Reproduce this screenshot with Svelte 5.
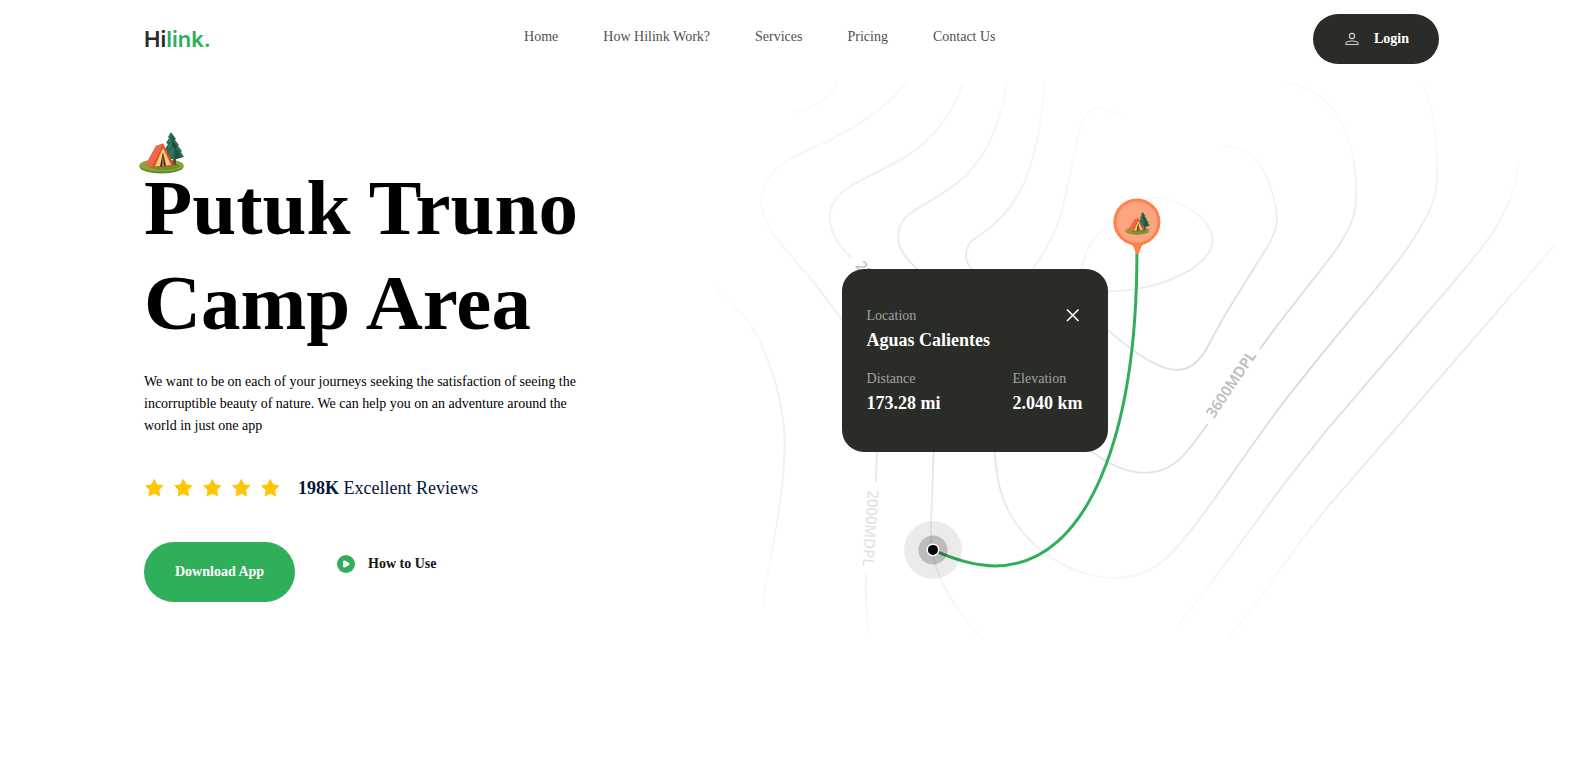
<script>
  const links = ['Home', 'How Hilink Work?', 'Services', 'Pricing', 'Contact Us'];
  const stars = [1, 2, 3, 4, 5];
  const contours = [
    'M794 112C812 110 828 100 838 84',
    'M906 83C880 115 850 130 828 141C805 152 790 156 775 170C764 182 761 192 761 202C763 222 772 233 785 249C800 266 820 288 842 320C865 352 880 400 877 452L876 482',
    'M866 574C865 600 866 620 870 638',
    'M963 83C950 120 930 142 905 157C880 173 850 182 838 196C830 206 829 215 830 222C832 238 843 249 851 258',
    'M934 440L932 500C930 530 930 550 937 570C945 592 962 618 982 638',
    'M1007 83C1003 110 992 145 975 165C955 190 930 200 912 212C900 220 898 232 898 238C899 252 910 262 920 272',
    'M994 440C996 480 1001 500 1012 517C1030 548 1070 578 1115 578C1150 577 1165 562 1185 538C1210 508 1240 461 1280 407C1310 368 1345 326 1375 290C1393 268 1410 247 1423 223C1433 206 1437 192 1437 180C1438 147 1436 114 1423 83',
    'M1045 83C1043 105 1039 140 1030 167C1020 200 1000 222 980 235C972 240 966 245 966 255C966 262 969 266 974 272',
    'M1125 117L1105 109C1095 105 1087 112 1083 120C1076 138 1073 163 1068 183C1064 207 1058 228 1047 247C1042 256 1034 264 1032 272',
    'M1108 291C1090 288 1080 278 1082 269C1085 246 1100 230 1113 220C1126 207 1140 198 1157 198C1175 199 1211 215 1213 240C1212 262 1180 279 1147 287C1133 290 1120 292 1108 291Z',
    'M1108 330C1126 346 1155 370 1177 370C1193 370 1202 357 1207 348C1216 332 1222 319 1230 307L1253 270C1263 253 1276 238 1277 220C1277 203 1270 183 1263 170C1254 154 1240 146 1220 146',
    'M1085 446C1105 463 1125 473 1145 473C1178 473 1190 447 1208 424',
    'M1260 349L1280 322L1305 290C1325 264 1356 231 1356 200C1358 175 1353 145 1340 120C1328 97 1305 83 1283 83',
    'M1177 627C1200 599 1235 550 1260 517C1280 488 1304 459 1327 430L1447 290C1477 254 1517 213 1518 162',
    'M1230 637L1260 598C1280 570 1303 537 1327 508L1427 393L1555 245',
    'M713 285C723 297 734 305 743 315C757 331 764 350 770 367C779 390 787 427 784 460C783 500 774 535 770 563C766 580 764 594 763 608'
  ];
  // Spots of light in the mask that let the contour lines show through
  const glows = [
    { id: 'east', place: 'translate(1270 370) rotate(-25) scale(330 200)', strength: 1 },
    { id: 'north', place: 'translate(930 235) scale(180 170)', strength: 0.45 },
    { id: 'south', place: 'translate(930 430) scale(240 200)', strength: 0.65 }
  ];
</script>

{#snippet tent()}
  <ellipse cx="22.5" cy="34.5" rx="22" ry="7" fill="#64842a" />
  <ellipse cx="22.5" cy="33.2" rx="22" ry="6.4" fill="#86a83a" />
  <ellipse cx="25" cy="34" rx="15" ry="4" fill="#6c8e2b" />
  <path d="M34 25h3v8h-3z" fill="#684633" />
  <path d="M32 0L29 5L30 6L27 11L29 12L26 17L28 19L27 24L31 27L38 27L45 25L42 20L43 19L39 14L40 13L36 8L37 7Z" fill="#2b6f52" />
  <path d="M32 2L33 8L33 13L36 18L35 26L41 26L40 20L37 17L38 14L34 9L35 7Z" fill="#1a5240" />
  <path d="M31 6L30 10M32 12L29 16M34 18L31 23" stroke="#3f8b69" stroke-width="1" fill="none" />
  <path d="M17 14L24 11.500L35 33L27 34.500L17 35L6 34Z" fill="#c9402b" />
  <path d="M17 14L24 11.500L21 20L15 35L6 34Z" fill="#f0684a" />
  <path d="M24 12L34 33L28 34L24 20L17 35L13 35Z" fill="#e4502f" />
  <path d="M24 16L32 33L16 34.500Z" fill="#f0d07a" />
  <path d="M24 20L27 33.500L21 34.500Z" fill="#4a1f18" />
  <path d="M24 22L25 34L23 34Z" fill="#b9894a" />
{/snippet}

<div class="page">
  <header>
    <a class="logo" href="#home" aria-label="Hilink."><span>Hi</span>link.</a>
    <nav aria-label="Main">
      {#each links as link}
        <a href="#{link}">{link}</a>
      {/each}
    </nav>
    <button class="login" type="button">
      <svg width="16" height="16" viewBox="0 0 16 16" fill="none" stroke="#d2d2d0" stroke-width="1.1" aria-hidden="true">
        <circle cx="8" cy="5" r="2.6" />
        <path d="M2 13.500V12.500C2 10.800 5 10 8 10S14 10.800 14 12.500V13.500Z" stroke-linejoin="round" />
      </svg>
      Login
    </button>
  </header>

  <main>
    <section class="intro">
      <svg class="camp" viewBox="0 0 45 42" aria-hidden="true">{@render tent()}</svg>
      <h1>Putuk Truno Camp Area</h1>
      <p class="lead">
        We want to be on each of your journeys seeking the satisfaction of seeing the incorruptible
        beauty of nature. We can help you on an adventure around the world in just one app
      </p>
      <div class="reviews">
        <div class="stars">
          {#each stars as star (star)}
            <svg width="20" height="20" viewBox="0 0 20 20" aria-hidden="true">
              <path
                d="M10.300 1.500L13 6.800L18.800 7.700L14.600 11.900L15.500 17.800L10.300 15.300L5.100 17.800L6 11.900L1.800 7.700L7.600 6.800Z"
                fill="#fec601" stroke="#fec601" stroke-width="1" stroke-linejoin="round"
              />
            </svg>
          {/each}
        </div>
        <p><strong>198K</strong> Excellent Reviews</p>
      </div>
      <div class="actions">
        <button class="download" type="button">Download App</button>
        <button class="howto" type="button">
          <svg width="18" height="18" viewBox="0 0 18 18" aria-hidden="true">
            <circle cx="9" cy="9" r="9" fill="#30af5b" />
            <path d="M7.500 7V11L11 9Z" fill="#fff" stroke="#fff" stroke-width="3" stroke-linejoin="round" />
          </svg>
          How to Use
        </button>
      </div>
    </section>

    <section class="map" aria-label="Route map">
      <svg class="terrain" viewBox="713 83 856 555">
        <defs>
          {#each glows as glow (glow.id)}
            <radialGradient id={glow.id} gradientUnits="userSpaceOnUse" cx="0" cy="0" r="1" gradientTransform={glow.place}>
              <stop offset="0" stop-color="#fff" stop-opacity={glow.strength} />
              <stop offset="0.4" stop-color="#fff" stop-opacity={glow.strength * 0.65} />
              <stop offset="1" stop-color="#fff" stop-opacity="0" />
            </radialGradient>
          {/each}
          <mask id="edge" maskUnits="userSpaceOnUse" x="713" y="83" width="856" height="555">
            <rect x="713" y="83" width="856" height="555" fill="#fff" fill-opacity="0.12" />
            {#each glows as glow (glow.id)}
              <rect x="713" y="83" width="856" height="555" fill="url(#{glow.id})" />
            {/each}
          </mask>
        </defs>
        <g mask="url(#edge)" fill="none" stroke="#d2d2d2" stroke-width="1.8">
          {#each contours as d}
            <path {d} />
          {/each}
        </g>
        <text class="height faint" transform="translate(868 490) rotate(94)">2000MDPL</text>
        <text class="height bold" transform="translate(1214 419) rotate(-56)">3600MDPL</text>
        <text class="height" transform="translate(855 266) rotate(52)">2000MDPL</text>
        <path d="M933 550C955 560 975 566 995 566C1090 566 1137 430 1137 253" fill="none" stroke="#30af5b" stroke-width="3" />
        <circle cx="933" cy="550" r="29" fill="#000" fill-opacity="0.08" />
        <circle cx="933" cy="550" r="14.5" fill="#000" fill-opacity="0.2" />
        <circle cx="933" cy="550" r="6.5" fill="#fff" />
        <circle cx="933" cy="550" r="5" fill="#000" />
        <path d="M1129 242H1146Q1141 245 1139 254H1136Q1134 245 1129 242Z" fill="#ff814c" />
        <circle cx="1137" cy="222" r="22" fill="#fea57f" stroke="#ff814c" stroke-width="3" />
        <svg x="1125" y="212" width="25" height="23" viewBox="0 0 45 42">{@render tent()}</svg>
      </svg>

      <div class="card">
        <dl>
          <div class="place">
            <dt>Location</dt>
            <dd>Aguas Calientes</dd>
          </div>
          <div>
            <dt>Distance</dt>
            <dd>173.28 mi</dd>
          </div>
          <div>
            <dt>Elevation</dt>
            <dd>2.040 km</dd>
          </div>
        </dl>
        <button class="close" type="button" aria-label="Close">
          <svg width="20" height="20" viewBox="0 0 20 20" aria-hidden="true">
            <path d="M4 4.500L15.500 16M15.500 4.500L4 16" stroke="#fff" stroke-width="1.6" />
          </svg>
        </button>
      </div>
    </section>
  </main>
</div>

<style>
  :global(body) {
    margin: 0;
    background: #fff;
  }
  .page {
    font-family: 'Liberation Serif', 'Times New Roman', serif;
    font-size: 14px;
    line-height: 22px;
    color: #000;
    overflow: hidden;
  }
  a {
    color: inherit;
    text-decoration: none;
  }
  button {
    border: 0;
    padding: 0;
    background: none;
    font: inherit;
    font-weight: 700;
    cursor: pointer;
  }
  svg {
    display: block;
    flex: none;
  }
  header {
    display: flex;
    align-items: center;
    justify-content: space-between;
    padding: 14px 130px 19px 144px;
  }
  .logo {
    font-family: Inter, sans-serif;
    font-size: 22px;
    line-height: 28px;
    font-weight: 600;
    color: #30af5b;
  }
  .logo span {
    color: #292c27;
  }
  nav {
    display: flex;
    gap: 45px;
    padding: 0 4px 4px 0;
    color: #4f4f4f;
  }
  .login {
    display: flex;
    align-items: center;
    gap: 14px;
    height: 50px;
    padding: 0 30px 0 31px;
    border-radius: 25px;
    background: #292c27;
    color: #fff;
  }
  main {
    display: grid;
    grid-template-columns: 5fr 6fr;
    align-items: start;
  }
  .intro {
    padding: 49px 0 36px 144px;
  }
  .camp {
    width: 45px;
    height: 42px;
    margin-left: -5px;
  }
  h1 {
    margin: -14px 0 21px;
    max-width: 500px;
    font-size: 79px;
    line-height: 95px;
    font-weight: 700;
  }
  p {
    margin: 0;
  }
  .lead {
    max-width: 450px;
  }
  .reviews {
    display: flex;
    align-items: center;
    gap: 18px;
    margin-top: 40px;
    font-size: 18px;
    color: #021639;
  }
  .stars {
    display: flex;
    gap: 9px;
  }
  .actions {
    display: flex;
    align-items: flex-start;
    gap: 42px;
    margin-top: 43px;
  }
  .download {
    height: 60px;
    padding: 0 31px;
    border-radius: 30px;
    background: #30af5b;
    color: #fff;
  }
  .howto {
    display: flex;
    align-items: center;
    gap: 13px;
    height: 44px;
    color: #141414;
  }
  .map {
    position: relative;
  }
  .terrain {
    width: 100%;
    height: auto;
  }
  .height {
    font-family: 'Noto Sans', sans-serif;
    font-size: 15px;
    font-weight: 500;
    fill: #bdbdbd;
  }
  .bold {
    font-weight: 600;
  }
  .faint {
    fill: #e2e2e2;
  }
  .card {
    position: absolute;
    left: 15%;
    top: 33.5%;
    display: flex;
    align-items: flex-start;
    box-sizing: border-box;
    width: 266px;
    padding: 36px 25px;
    border-radius: 22px;
    background: #292c27;
    color: #fff;
  }
  dl {
    flex: 1;
    display: grid;
    grid-template-columns: auto auto;
    justify-content: space-between;
    row-gap: 15px;
    margin: 0 -20px 0 0;
  }
  .place {
    grid-column: 1 / -1;
  }
  dt {
    color: #a2a2a2;
  }
  dd {
    margin: 0;
    font-size: 18px;
    line-height: 26px;
    font-weight: 700;
  }
  .close {
    position: relative;
    width: 20px;
    height: 20px;
  }
</style>
